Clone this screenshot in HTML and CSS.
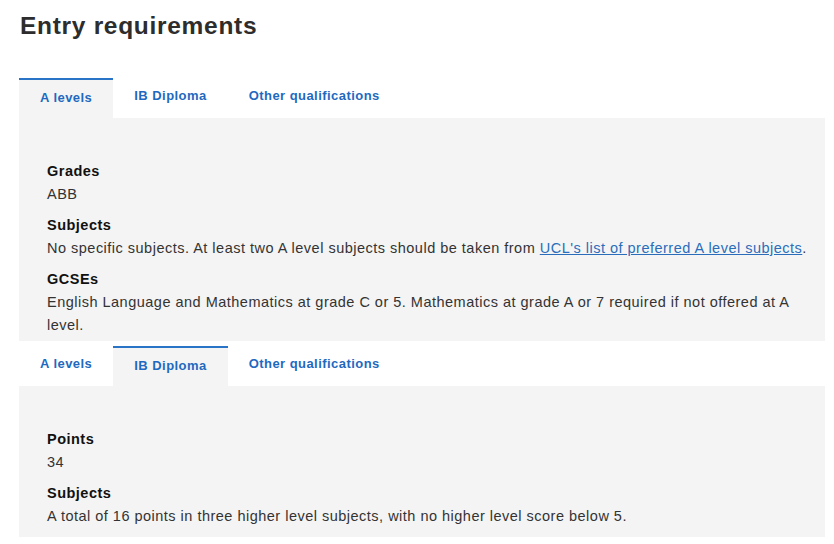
FILE: index.html
```html
<!DOCTYPE html>
<html>
<head>
    <meta charset="utf-8">
    <link rel="stylesheet" href="styles.css">
</head>
<body>

<div class="page">
    <h1>Entry requirements</h1>

    <div class="tabs tabs-first">
        <ul class="tablist">
            <li class="tab active"><a href="#alevels">A levels</a></li>
            <li class="tab"><a href="#ib">IB Diploma</a></li>
            <li class="tab"><a href="#other">Other qualifications</a></li>
        </ul>
        <div class="panel" id="alevels">
            <dl>
                <dt>Grades</dt>
                <dd>ABB</dd>
                <dt>Subjects</dt>
                <dd>No specific subjects. At least two A level subjects should be taken from <a href="#">UCL's list of preferred A level subjects</a>.</dd>
                <dt>GCSEs</dt>
                <dd>English Language and Mathematics at grade C or 5. Mathematics at grade A or 7 required if not offered at A level.</dd>
            </dl>
        </div>
    </div>

    <div class="tabs">
        <ul class="tablist">
            <li class="tab"><a href="#alevels">A levels</a></li>
            <li class="tab active"><a href="#ib">IB Diploma</a></li>
            <li class="tab"><a href="#other">Other qualifications</a></li>
        </ul>
        <div class="panel panel-last" id="ib">
            <dl>
                <dt>Points</dt>
                <dd>34</dd>
                <dt>Subjects</dt>
                <dd>A total of 16 points in three higher level subjects, with no higher level score below 5.</dd>
            </dl>
        </div>
    </div>
</div>

</body>
</html>
```

FILE: styles.css
```css
* {
    box-sizing: border-box;
}

body {
    margin: 0;
    font-family: "Liberation Sans", Arial, sans-serif;
    color: #333;
    background: #fff;
}

.page {
    padding: 0 9px 0 19px;
}

h1 {
    margin: 12px 0 38px 1px;
    font-size: 24.5px;
    line-height: 28px;
    letter-spacing: 0.7px;
    font-weight: bold;
    color: #2d2d2d;
}

.tabs-first {
    margin-bottom: 5px;
}

.tablist {
    display: flex;
    align-items: flex-start;
    list-style: none;
    margin: 0;
    padding: 0;
    height: 40px;
}

.tab a {
    display: block;
    padding: 9px 21px 11px;
    font-size: 13px;
    line-height: 18px;
    letter-spacing: 0.45px;
    font-weight: bold;
    color: #1f69c0;
    text-decoration: none;
}

.tab.active {
    background: #f4f4f4;
    border-top: 2px solid #2a74c8;
    height: 40px;
}

.panel {
    background: #f4f4f4;
    padding: 42px 16px 4px 28px;
    font-size: 14.5px;
    line-height: 23px;
    letter-spacing: 0.49px;
}

.panel-last {
    padding-bottom: 9px;
}

.panel dl {
    margin: 0;
}

.panel dt {
    font-weight: bold;
    color: #111;
}

.panel dd {
    margin: 0 0 8px 0;
}

.panel dd:last-child {
    margin-bottom: 0;
}

.panel dd a {
    color: #2a6ebb;
    text-decoration: underline;
}
```
